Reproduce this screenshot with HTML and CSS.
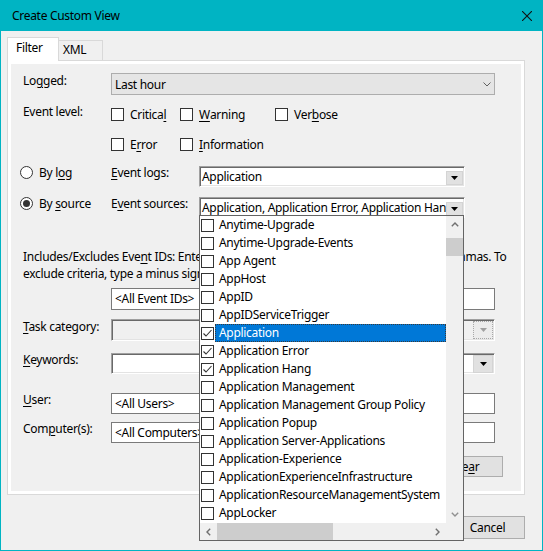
FILE: index.html
```html
<!DOCTYPE html>
<html lang="en">
<head>
<meta charset="utf-8">
<title>Create Custom View</title>
<link rel="stylesheet" href="styles.css">
</head>
<body>
<div class="window">
  <div class="titlebar">
    <span class="title">Create Custom View</span>
    <svg class="close" width="10" height="10" viewBox="0 0 10 10"><path d="M0 0L10 10M10 0L0 10" stroke="#111" stroke-width="1.1"/></svg>
  </div>
  <div class="tabs">
    <div class="tab active">Filter</div>
    <div class="tab xml">XML</div>
  </div>
  <div class="tabbody">
    <div class="panel">
      <div class="row r-logged">
        <div class="lbl">Lo<u>g</u>ged:</div>
        <div class="flat-combo"><span>Last hour</span><svg class="chev" width="8" height="5" viewBox="0 0 8 5"><path d="M0.5 0.5L4 4L7.5 0.5" fill="none" stroke="#606060"/></svg></div>
      </div>
      <div class="row r-level">
        <div class="lbl">Event level:</div>
        <div class="checks">
          <div class="chkrow">
            <div class="chk c1"><span class="box"></span>Critica<u>l</u></div>
            <div class="chk c2"><span class="box"></span><u>W</u>arning</div>
            <div class="chk"><span class="box"></span>Ver<u>b</u>ose</div>
          </div>
          <div class="chkrow">
            <div class="chk c1"><span class="box"></span>E<u>r</u>ror</div>
            <div class="chk"><span class="box"></span><u>I</u>nformation</div>
          </div>
        </div>
      </div>
      <div class="row r-radio r-bylog">
        <div class="radio"><svg width="13" height="13" viewBox="0 0 13 13"><circle cx="6.5" cy="6.5" r="6" fill="#fff" stroke="#333"/></svg><span>By l<u>o</u>g</span></div>
        <div class="lbl2"><u>E</u>vent logs:</div>
        <div class="combo sunken white narrow"><span class="ctext">Application</span><span class="dbtn"><svg width="7" height="4" viewBox="0 0 7 4"><path d="M0 0H7L3.5 4Z" fill="#000"/></svg></span></div>
      </div>
      <div class="row r-radio r-bysrc">
        <div class="radio"><svg width="13" height="13" viewBox="0 0 13 13"><circle cx="6.5" cy="6.5" r="6" fill="#fff" stroke="#333"/><circle cx="6.5" cy="6.5" r="3.5" fill="#333"/></svg><span>By <u>s</u>ource</span></div>
        <div class="lbl2">E<u>v</u>ent sources:</div>
        <div class="combo sunken white narrow"><span class="ctext">Application, Application Error, Application Hang</span><span class="dbtn"><svg width="7" height="4" viewBox="0 0 7 4"><path d="M0 0H7L3.5 4Z" fill="#000"/></svg></span></div>
      </div>
      <div class="desc">
        <div class="dline">Includes/Excludes Eve<u>n</u>t IDs: Enter ID numbers and/or ID ranges separated by commas. To</div>
        <div class="dline">exclude criteria, type a minus sign first. For example 1,3,5-99,-76</div>
      </div>
      <div class="row r-ids">
        <div class="input">&lt;All Event IDs&gt;</div>
      </div>
      <div class="row r-task">
        <div class="lbl"><u>T</u>ask category:</div>
        <div class="combo sunken wide disabled"><span class="ctext"></span><span class="dbtn big dis"><svg width="7" height="4" viewBox="0 0 7 4"><path d="M0 0H7L3.5 4Z" fill="#a0a0a0"/></svg></span></div>
      </div>
      <div class="row r-kw">
        <div class="lbl"><u>K</u>eywords:</div>
        <div class="combo sunken white wide"><span class="ctext"></span><span class="dbtn big"><svg width="7" height="4" viewBox="0 0 7 4"><path d="M0 0H7L3.5 4Z" fill="#000"/></svg></span></div>
      </div>
      <div class="row r-user">
        <div class="lbl"><u>U</u>ser:</div>
        <div class="input">&lt;All Users&gt;</div>
      </div>
      <div class="row r-comp">
        <div class="lbl">Com<u>p</u>uter(s):</div>
        <div class="input">&lt;All Computers&gt;</div>
      </div>
      <div class="row r-clear">
        <div class="btn">Cle<u>a</u>r</div>
      </div>
    </div>
  </div>
  <div class="buttons">
    <div class="btn">OK</div>
    <div class="btn">Cancel</div>
  </div>

  <div class="droplist">
    <div class="items">
      <div class="item"><span class="box"></span><span class="itext">Anytime-Upgrade</span></div>
      <div class="item"><span class="box"></span><span class="itext">Anytime-Upgrade-Events</span></div>
      <div class="item"><span class="box"></span><span class="itext">App Agent</span></div>
      <div class="item"><span class="box"></span><span class="itext">AppHost</span></div>
      <div class="item"><span class="box"></span><span class="itext">AppID</span></div>
      <div class="item"><span class="box"></span><span class="itext">AppIDServiceTrigger</span></div>
      <div class="item sel"><span class="box"><svg width="11" height="11" viewBox="0 0 11 11"><path d="M1.5 5.5L4 8L9.5 2" fill="none" stroke="#333" stroke-width="1.1"/></svg></span><span class="itext">Application</span></div>
      <div class="item"><span class="box"><svg width="11" height="11" viewBox="0 0 11 11"><path d="M1.5 5.5L4 8L9.5 2" fill="none" stroke="#333" stroke-width="1.1"/></svg></span><span class="itext">Application Error</span></div>
      <div class="item"><span class="box"><svg width="11" height="11" viewBox="0 0 11 11"><path d="M1.5 5.5L4 8L9.5 2" fill="none" stroke="#333" stroke-width="1.1"/></svg></span><span class="itext">Application Hang</span></div>
      <div class="item"><span class="box"></span><span class="itext">Application Management</span></div>
      <div class="item"><span class="box"></span><span class="itext">Application Management Group Policy</span></div>
      <div class="item"><span class="box"></span><span class="itext">Application Popup</span></div>
      <div class="item"><span class="box"></span><span class="itext">Application Server-Applications</span></div>
      <div class="item"><span class="box"></span><span class="itext">Application-Experience</span></div>
      <div class="item"><span class="box"></span><span class="itext">ApplicationExperienceInfrastructure</span></div>
      <div class="item"><span class="box"></span><span class="itext">ApplicationResourceManagementSystem</span></div>
      <div class="item"><span class="box"></span><span class="itext">AppLocker</span></div>
    </div>
    <div class="vscroll">
      <div class="sbtn"><svg width="8" height="5" viewBox="0 0 8 5"><path d="M0.8 4.2L4 1L7.2 4.2" fill="none" stroke="#707070" stroke-width="1.4"/></svg></div>
      <div class="vtrack"><div class="vthumb"></div></div>
      <div class="sbtn"><svg width="8" height="5" viewBox="0 0 8 5"><path d="M0.8 0.8L4 4L7.2 0.8" fill="none" stroke="#909090" stroke-width="1.4"/></svg></div>
    </div>
    <div class="hscroll">
      <div class="sbtn h"><svg width="5" height="8" viewBox="0 0 5 8"><path d="M4.2 0.8L1 4L4.2 7.2" fill="none" stroke="#707070" stroke-width="1.4"/></svg></div>
      <div class="htrack"><div class="hthumb"></div></div>
      <div class="sbtn h"><svg width="5" height="8" viewBox="0 0 5 8"><path d="M0.8 0.8L4 4L0.8 7.2" fill="none" stroke="#707070" stroke-width="1.4"/></svg></div>
    </div>
    <div class="corner"></div>
  </div>
</div>
</body>
</html>
```

FILE: styles.css
```css
* { box-sizing: border-box; }
html, body { margin: 0; padding: 0; background: #f0f0f0; }
body { font-family: "Noto Sans", "DejaVu Sans", sans-serif; font-size: 12px; color: #000; letter-spacing: -0.3px; }
u { text-decoration: underline; text-underline-offset: 2px; text-decoration-thickness: 1px; }

.window { position: relative; width: 543px; height: 551px; background: #f0f0f0; border: 1px solid #00b4c3; border-top: 0; overflow: hidden; }
.titlebar { height: 31px; background: #00b4c3; display: flex; align-items: center; justify-content: space-between; padding: 0 10px 0 11px; }
.title { line-height: 16px; }
.close { display: block; }

.tabs { display: flex; align-items: flex-end; height: 23px; margin: 6px 0 0 6px; position: relative; z-index: 1; }
.tab { border: 1px solid #d9d9d9; border-bottom: 0; }
.tab.active { height: 24px; width: 52px; margin-bottom: -1px; background: #fff; padding-left: 8px; line-height: 20px; }
.tab.xml { height: 20px; width: 44px; border-left: 0; padding-left: 4px; line-height: 18px; background: #f0f0f0; }
.tabbody { width: 518px; height: 435px; margin-left: 6px; border: 1px solid #d9d9d9; background: #fff; padding: 3px; }
.panel { height: 100%; background: #f0f0f0; padding: 9px 0 0 12px; overflow: hidden; }

.row { display: flex; align-items: flex-start; }
.lbl { width: 88px; flex: none; line-height: 16px; }
.lbl2 { width: 88px; flex: none; line-height: 14px; }

.flat-combo { width: 384px; height: 22px; background: #e5e5e5; border: 1px solid #adadad; display: flex; align-items: center; justify-content: space-between; padding: 0 3px 0 3px; }
.flat-combo .chev { display: block; }

.r-level { margin-top: 9px; }
.checks { display: flex; flex-direction: column; gap: 17px; margin-top: 4px; }
.chkrow { display: flex; height: 13px; }
.chk { display: flex; align-items: center; height: 13px; line-height: 14px; white-space: nowrap; }
.chk.c1 { width: 69px; }
.chk.c2 { width: 95px; }
.box { width: 13px; height: 13px; flex: none; border: 1px solid #333; background: #fff; margin-right: 6px; display: flex; align-items: center; justify-content: center; }
.box svg { display: block; }

.r-radio { margin-left: -3px; height: 21px; }
.r-bylog { margin-top: 15px; }
.r-bysrc { margin-top: 10px; }
.radio { width: 91px; flex: none; display: flex; align-items: flex-start; line-height: 14px; }
.radio svg { display: block; flex: none; margin-right: 6px; }

.combo { position: relative; display: flex; align-items: center; height: 21px; }
.combo.narrow { width: 266px; }
.combo.wide { width: 384px; height: 22px; }
.sunken { border: 1px solid; border-color: #a0a0a0 #ffffff #ffffff #a0a0a0; box-shadow: inset 1px 1px 0 #696969, inset -1px -1px 0 #e3e3e3; }
.combo.white { background: #fff; }
.combo.disabled { background: #f0f0f0; }
.ctext { flex: 1; overflow: hidden; white-space: nowrap; padding-left: 2px; line-height: 16px; }
.dbtn { flex: none; width: 17px; height: 14px; margin: 2px 1px 0 0; background: #e1e1e1; border: 1px solid #d4d4d4; display: flex; align-items: center; justify-content: center; }
.dbtn svg { display: block; }
.dbtn.big { width: 20px; height: 18px; margin: 0 1px 0 0; }
.dbtn.dis { border: 1px dotted #a8a8a8; background: #ececec; }

.desc { margin-top: 30px; line-height: 17px; white-space: nowrap; }
.r-ids { margin-top: 6px; padding-left: 88px; }
.input { width: 384px; height: 22px; background: #fff; border: 1px solid #7a7a7a; line-height: 19px; padding-left: 3px; white-space: nowrap; overflow: hidden; }
.r-task { margin-top: 9px; }
.r-kw { margin-top: 12px; }
.r-kw .combo { height: 21px; }
.r-kw .lbl, .r-user .lbl, .r-comp .lbl { margin-top: -1px; }
.r-user { margin-top: 19px; }
.r-user .input, .r-comp .input { height: 21px; }
.r-comp { margin-top: 8px; }
.r-clear { margin-top: 13px; padding-left: 405px; }

.btn { width: 75px; height: 21px; background: #e1e1e1; border: 1px solid #adadad; display: flex; align-items: center; justify-content: center; line-height: 16px; }
.buttons { display: flex; justify-content: flex-end; gap: 6px; margin-top: 21px; padding-right: 17px; }
.buttons .btn { height: 23px; }

.droplist { position: absolute; left: 198px; top: 215px; width: 265px; height: 326px; border: 1px solid #646464; background: #fff; display: grid; grid-template-columns: 1fr 17px; grid-template-rows: 1fr 17px; z-index: 5; }
.items { overflow: hidden; }
.item { height: 18px; display: flex; align-items: center; padding-left: 1px; white-space: nowrap; }
.item .box { margin-right: 1px; }
.itext { flex: 1; height: 18px; line-height: 16px; border: 1px solid transparent; padding-left: 3px; }
.item.sel .itext { background: #0078d7; color: #fff; border: 1px dotted #3a3a3a; }

.vscroll { background: #f0f0f0; display: flex; flex-direction: column; }
.sbtn { height: 17px; flex: none; display: flex; align-items: center; justify-content: center; }
.sbtn.h { width: 17px; height: auto; }
.vtrack { flex: 1; padding-top: 5px; }
.vthumb { height: 18px; background: #cdcdcd; }
.hscroll { background: #f0f0f0; display: flex; }
.htrack { flex: 1; }
.hthumb { width: 116px; height: 100%; background: #cdcdcd; }
.corner { background: #f0f0f0; }
```
